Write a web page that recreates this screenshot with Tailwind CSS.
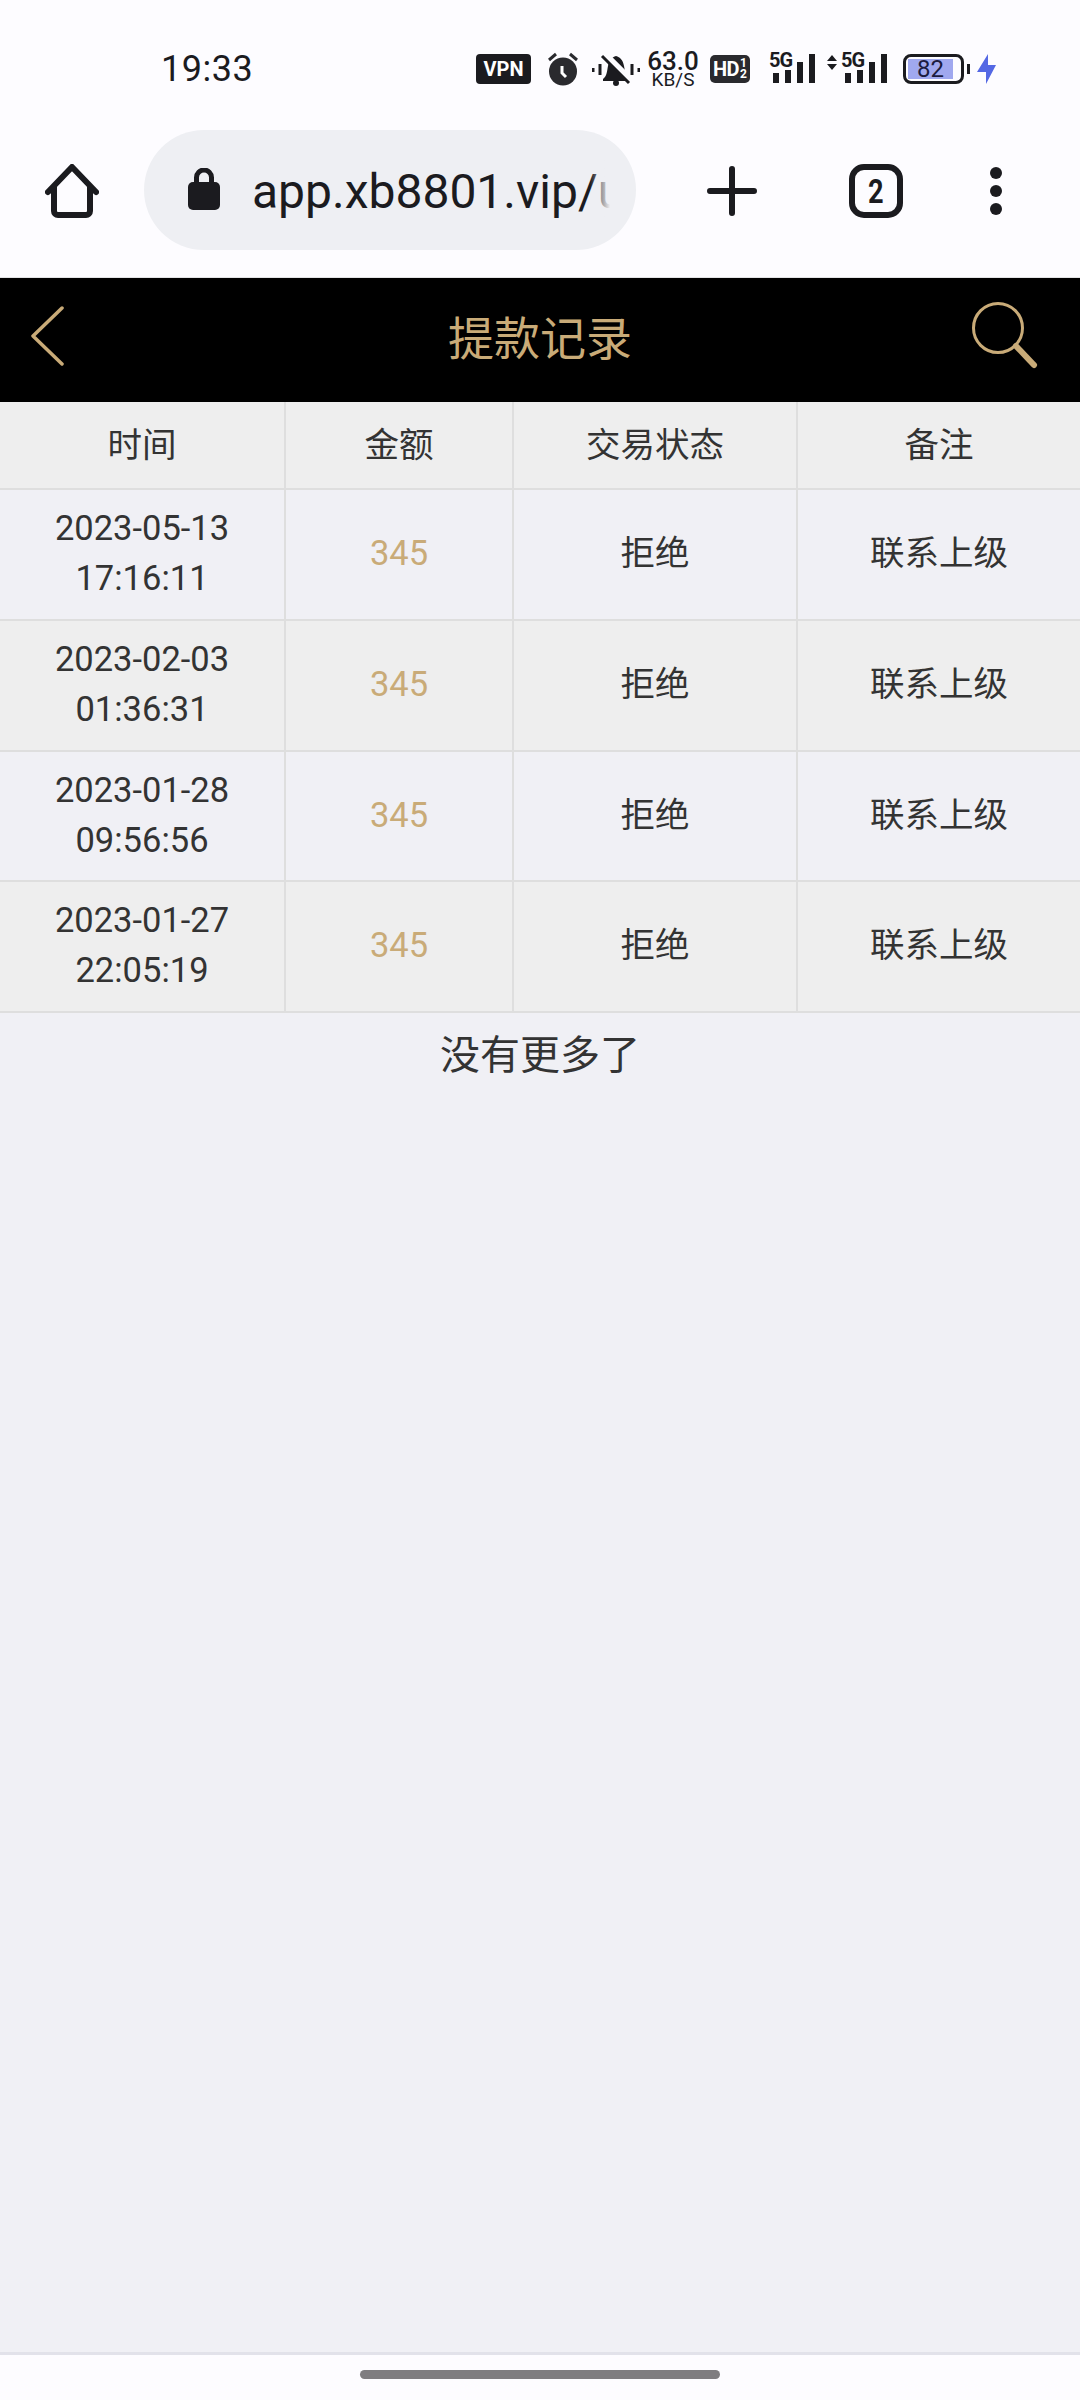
<!DOCTYPE html>
<html lang="zh">
<head>
<meta charset="utf-8">
<script src="https://cdn.jsdelivr.net/npm/@tailwindcss/browser@4"></script>
</head>
<body class="m-0 bg-[#f0f0f5]">
<div class="flex h-[2400px] w-[1080px] flex-col overflow-hidden bg-[#f0f0f5] font-['Roboto','Noto_Sans_CJK_SC',sans-serif] text-[#333333]">

  <!-- Status bar -->
  <div class="flex h-[130px] shrink-0 items-center bg-[#fdfcff] pl-[161px] pt-[8px] text-[#1b1b1f]">
    <span class="w-[315px] text-[36px] leading-none font-[450] tracking-[0.5px]">19:33</span>
    <div class="flex h-[40px] items-center">
      <span class="flex h-[30px] w-[55px] items-center justify-center rounded-[4px] bg-[#1b1b1f] text-[20px] font-bold text-white">VPN</span>
      <svg class="ml-[16px]" width="32" height="34" viewBox="0 0 32 34"><circle cx="16" cy="19.500" r="14" fill="#2a2a2e"/><path d="M2 8l7-6M30 8l-7-6" stroke="#2a2a2e" stroke-width="3"/><path d="M15 14v7l4 4" stroke="#fff" stroke-width="3" fill="none"/></svg>
      <svg class="ml-[13px]" width="48" height="33" viewBox="0 0 48 33"><path d="M11 26c4-3 4-8 5-13 1-6 4-9 8-10 4 1 7 4 8 10 1 5 1 10 5 13v2H11z" fill="#1b1b1f"/><circle cx="24" cy="30" r="3" fill="#1b1b1f"/><path d="M13 1l27 27" stroke="#fdfcff" stroke-width="6"/><path d="M10 3l27 27" stroke="#1b1b1f" stroke-width="3"/><path d="M1 15v4M8 11v11M40 11v11M47 15v4" stroke="#1b1b1f" stroke-width="3"/></svg>
      <div class="ml-[8px] flex w-[50px] flex-col items-center">
        <span class="text-[26px] leading-[21px] font-medium">63.0</span>
        <span class="text-[19px] leading-[16px]">KB/S</span>
      </div>
      <span class="ml-[12px] flex h-[28px] w-[40px] items-center justify-center gap-[1px] rounded-[5px] bg-[#2a2a2e] text-white"><span class="text-[20px] leading-none font-bold tracking-[-0.5px]">HD</span><span class="flex flex-col text-[12px] leading-[11px] font-bold"><span>1</span><span>2</span></span></span>
      <div class="relative ml-[19px] flex h-[30px] w-[46px] items-end gap-[6px] pb-[1px] pl-[4px]">
        <span class="absolute top-[-3px] left-0 text-[20px] leading-[18px] font-bold tracking-[-1px]">5G</span>
        <span class="h-[10px] w-[6px] bg-[#1b1b1f]"></span><span class="h-[13px] w-[6px] bg-[#1b1b1f]"></span><span class="h-[21px] w-[6px] bg-[#1b1b1f]"></span><span class="h-[29px] w-[6px] bg-[#1b1b1f]"></span>
      </div>
      <div class="relative ml-[12px] flex h-[30px] w-[60px] items-end justify-end gap-[6px] pb-[1px]">
        <svg class="absolute top-[1px] left-0" width="10" height="15" viewBox="0 0 10 15"><path d="M5 0l5 6H0zM5 15l5-6H0z" fill="#1b1b1f"/></svg>
        <span class="absolute top-[-3px] left-[14px] text-[20px] leading-[18px] font-bold tracking-[-1px]">5G</span>
        <span class="h-[10px] w-[6px] bg-[#1b1b1f]"></span><span class="h-[13px] w-[6px] bg-[#1b1b1f]"></span><span class="h-[21px] w-[6px] bg-[#1b1b1f]"></span><span class="h-[29px] w-[6px] bg-[#1b1b1f]"></span>
      </div>
      <div class="ml-[16px] flex h-[30px] w-[61px] items-center rounded-[8px] border-[3px] border-[#1b1b1f] pl-[2px]">
        <span class="flex h-[20px] w-[45px] items-center justify-center bg-[#a0a8ef] text-[24px] leading-none text-[#1b1b3f]">82</span>
      </div>
      <span class="ml-[3px] h-[10px] w-[3px] bg-[#1b1b1f]"></span>
      <svg class="ml-[7px]" width="19" height="30" viewBox="0 0 19 30"><path d="M11 0L0 18h9v12l10-19h-8z" fill="#5468e4"/></svg>
    </div>
  </div>

  <!-- Browser toolbar -->
  <div class="flex h-[148px] shrink-0 items-start border-b-[1px] border-[#e3e3e5] bg-[#fdfcff] text-[#1b1b1f]">
    <svg class="mt-[34px] ml-[45px]" width="54" height="54" viewBox="0 0 54 54"><path d="M3 28L27 3l24 25M9 22v25a4 4 0 0 0 4 4h28a4 4 0 0 0 4-4V22" fill="none" stroke="#1b1b1f" stroke-width="6" stroke-linecap="round" stroke-linejoin="round"/></svg>
    <div class="relative ml-[45px] flex h-[120px] w-[492px] items-center overflow-hidden rounded-[60px] bg-[#eeeff3] pl-[44px]">
      <svg class="mb-[2px]" width="32" height="42" viewBox="0 0 32 42"><path d="M8.500 17V9.500a7.500 7.500 0 0 1 15 0V17" fill="none" stroke="#1b1b1f" stroke-width="5"/><rect x="0" y="14" width="32" height="28" rx="5" fill="#1b1b1f"/></svg>
      <div class="ml-[32px] w-[358px] overflow-hidden whitespace-nowrap pt-[3px] text-[48px] leading-[56px]">app.xb8801.vip/user</div>
      <span class="absolute top-[30px] left-[446px] h-[60px] w-[20px] bg-linear-to-r from-[#eeeff3]/0 to-[#eeeff3]"></span>
    </div>
    <svg class="mt-[36px] ml-[71px]" width="50" height="50" viewBox="0 0 50 50"><path d="M25 3v44M3 25h44" stroke="#1b1b1f" stroke-width="6" stroke-linecap="round"/></svg>
    <div class="mt-[34px] ml-[92px] flex h-[54px] w-[54px] items-center justify-center rounded-[15px] border-[6px] border-[#1b1b1f] leading-none"><span class="inline-block scale-x-[0.8] text-[34px] font-bold">2</span></div>
    <svg class="mt-[36px] ml-[86px]" width="14" height="50" viewBox="0 0 14 50"><circle cx="7" cy="7" r="6" fill="#1b1b1f"/><circle cx="7" cy="25" r="6" fill="#1b1b1f"/><circle cx="7" cy="43" r="6" fill="#1b1b1f"/></svg>
  </div>

  <!-- Page header -->
  <div class="relative flex h-[124px] shrink-0 items-center justify-center bg-black pb-[3px] text-[46px] text-[#c9ab78]">
    <svg class="absolute left-[30px] top-[28px]" width="34" height="60" viewBox="0 0 34 60"><path d="M32 2L3 30l29 28" fill="none" stroke="#c9ab78" stroke-width="3.500" stroke-linecap="round" stroke-linejoin="round"/></svg>
    <span class="leading-none">提款记录</span>
    <svg class="absolute left-[969px] top-[21px]" width="70" height="70" viewBox="0 0 70 70"><circle cx="29" cy="29" r="24.500" fill="none" stroke="#c9ab78" stroke-width="3"/><path d="M47 47l18 19" stroke="#c9ab78" stroke-width="6" stroke-linecap="round"/></svg>
  </div>

  <!-- Table -->
  <div class="shrink-0 text-center text-[34.5px] leading-[50px]">
    <div class="grid h-[88px] grid-cols-[286px_228px_284px_282px] border-b-[2px] border-[#dedede] bg-[#eeeeee]">
      <div class="flex items-center justify-center border-r-[2px] border-[#dedede]">时间</div>
      <div class="flex items-center justify-center border-r-[2px] border-[#dedede]">金额</div>
      <div class="flex items-center justify-center border-r-[2px] border-[#dedede]">交易状态</div>
      <div class="flex items-center justify-center">备注</div>
    </div>
    <div class="grid h-[131px] grid-cols-[286px_228px_284px_282px] border-b-[2px] border-[#dedede] bg-[#f0f0f5]">
      <div class="flex items-center justify-center border-r-[2px] border-[#dedede] pb-[3px]">2023-05-13<br>17:16:11</div>
      <div class="flex items-center justify-center border-r-[2px] border-[#dedede] pb-[3px] text-[#c9ab78]">345</div>
      <div class="flex items-center justify-center border-r-[2px] border-[#dedede] pb-[3px]">拒绝</div>
      <div class="flex items-center justify-center pb-[3px]">联系上级</div>
    </div>
    <div class="grid h-[131px] grid-cols-[286px_228px_284px_282px] border-b-[2px] border-[#dedede] bg-[#eeeeee]">
      <div class="flex items-center justify-center border-r-[2px] border-[#dedede] pb-[3px]">2023-02-03<br>01:36:31</div>
      <div class="flex items-center justify-center border-r-[2px] border-[#dedede] pb-[3px] text-[#c9ab78]">345</div>
      <div class="flex items-center justify-center border-r-[2px] border-[#dedede] pb-[3px]">拒绝</div>
      <div class="flex items-center justify-center pb-[3px]">联系上级</div>
    </div>
    <div class="grid h-[130px] grid-cols-[286px_228px_284px_282px] border-b-[2px] border-[#dedede] bg-[#f0f0f5]">
      <div class="flex items-center justify-center border-r-[2px] border-[#dedede] pb-[3px]">2023-01-28<br>09:56:56</div>
      <div class="flex items-center justify-center border-r-[2px] border-[#dedede] pb-[3px] text-[#c9ab78]">345</div>
      <div class="flex items-center justify-center border-r-[2px] border-[#dedede] pb-[3px]">拒绝</div>
      <div class="flex items-center justify-center pb-[3px]">联系上级</div>
    </div>
    <div class="grid h-[131px] grid-cols-[286px_228px_284px_282px] border-b-[2px] border-[#dedede] bg-[#eeeeee]">
      <div class="flex items-center justify-center border-r-[2px] border-[#dedede] pb-[3px]">2023-01-27<br>22:05:19</div>
      <div class="flex items-center justify-center border-r-[2px] border-[#dedede] pb-[3px] text-[#c9ab78]">345</div>
      <div class="flex items-center justify-center border-r-[2px] border-[#dedede] pb-[3px]">拒绝</div>
      <div class="flex items-center justify-center pb-[3px]">联系上级</div>
    </div>
  </div>
  <div class="flex h-[84px] shrink-0 items-center justify-center pt-[2px] text-[40px] leading-none">没有更多了</div>

  <!-- Bottom -->
  <div class="flex-1"></div>
  <div class="flex h-[48px] shrink-0 items-start justify-center border-t-[3px] border-[#e2e2ea] bg-[#fdfcff] pt-[15px]">
    <span class="h-[9px] w-[360px] rounded-full bg-[#7f7d80]"></span>
  </div>
</div>
</body>
</html>
